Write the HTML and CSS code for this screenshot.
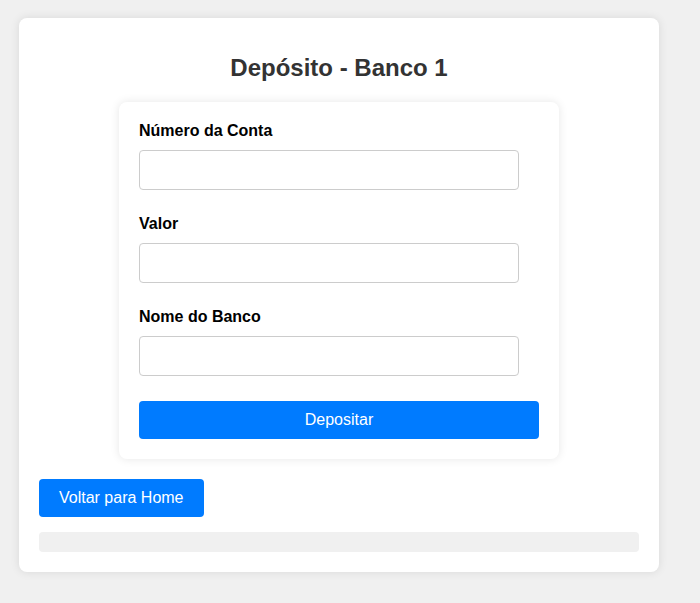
FILE: index.html
```html
<!DOCTYPE html>
<html lang="pt">
<head>
<meta charset="utf-8">
<title>Depósito - Banco 1</title>
<link rel="stylesheet" href="styles.css">
</head>
<body>
<div class="container">
  <h2 class="title">Depósito - Banco 1</h2>
  <form class="card" onsubmit="return false;">
    <label class="label" for="conta">Número da Conta</label>
    <input class="input" id="conta" type="text">
    <label class="label" for="valor">Valor</label>
    <input class="input" id="valor" type="text">
    <label class="label" for="banco">Nome do Banco</label>
    <input class="input" id="banco" type="text">
    <button class="btn btn-full" type="submit">Depositar</button>
  </form>
  <button class="btn btn-back" type="button">Voltar para Home</button>
  <div class="result"></div>
</div>
</body>
</html>
```

FILE: styles.css
```css
* { box-sizing: border-box; }
html, body { margin: 0; }
body {
  background: #f0f0f0;
  font-family: Arial, "Liberation Sans", sans-serif;
  padding: 18px 41px 20px 19px;
}
.container {
  background: #fff;
  width: 640px;
  padding: 20px;
  border-radius: 8px;
  box-shadow: 0 0 10px rgba(0,0,0,0.1);
}
.title {
  text-align: center;
  color: #333;
  font-size: 24px;
  margin: 16px 0 20px;
}
.card {
  width: 440px;
  margin: 0 auto;
  padding: 20px;
  background: #fff;
  border-radius: 8px;
  box-shadow: 0 0 10px rgba(0,0,0,0.1);
}
.label {
  display: block;
  font-weight: bold;
  font-size: 16px;
  color: #000;
  margin-bottom: 10px;
}
.input {
  display: block;
  width: 380px;
  height: 40px;
  padding: 10px;
  font-size: 16px;
  border: 1px solid #ccc;
  border-radius: 4px;
  margin: 0 0 25px;
}
.btn {
  background: #007bff;
  color: #fff;
  border: none;
  border-radius: 4px;
  font-family: Arial, "Liberation Sans", sans-serif;
  font-size: 16px;
  height: 38px;
  padding: 0 20px;
  cursor: pointer;
}
.btn-full {
  display: block;
  width: 100%;
}
.btn-back {
  display: block;
  margin-top: 20px;
}
.result {
  margin-top: 15px;
  height: 20px;
  background: #f0f0f0;
  border-radius: 4px;
}
```
